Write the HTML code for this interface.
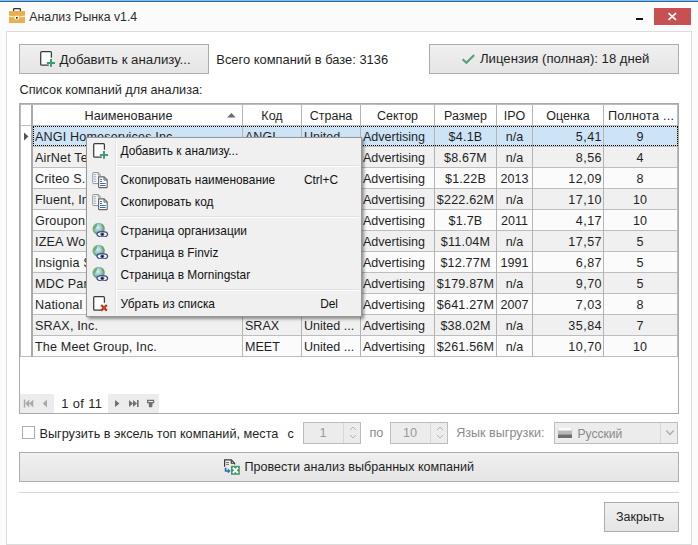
<!DOCTYPE html>
<html><head><meta charset="utf-8"><style>
html,body{margin:0;padding:0}
body{width:698px;height:545px;position:relative;overflow:hidden;background:#fbfbfb;font-family:"Liberation Sans",sans-serif}
.t{position:absolute;white-space:nowrap;line-height:20px;height:20px}
.btn{position:absolute;box-sizing:border-box;border:1px solid #acacac;background:linear-gradient(#f0f0f0,#e5e5e5)}
svg{display:block}
</style></head><body>
<div style="position:absolute;left:0;top:0;width:698px;height:1px;background:#7fbff5"></div>
<div style="position:absolute;left:0;top:1px;width:698px;height:1px;background:#2d6496"></div>
<div style="position:absolute;left:0;top:2px;width:698px;height:1px;background:#ffffff"></div>
<svg style="position:absolute;left:9px;top:7px" width="16" height="16" viewBox="0 0 16 16">
<path d="M4.6 4 V2.4 Q4.6 1.6 5.4 1.6 H10.6 Q11.4 1.6 11.4 2.4 V4" fill="none" stroke="#333" stroke-width="1.25"/>
<rect x="0" y="4" width="16" height="12" fill="#e8b04f"/>
<path d="M0 9.2 L5.5 10 M10.5 10 L16 9.2" stroke="#fbeccb" stroke-width="1.2"/>
<rect x="5.6" y="8.8" width="4.4" height="3.6" rx="0.7" fill="#fffaf0"/>
<rect x="7" y="10.1" width="1.7" height="1.5" fill="#1a1a1a"/>
</svg>
<div class="t" style="left:29.3px;top:6.54px;font-size:12.3px;color:#2b2b2b;">Анализ Рынка v1.4</div>
<div style="position:absolute;left:636px;top:18px;width:7px;height:2px;background:#111"></div>
<div style="position:absolute;left:654px;top:8px;width:37px;height:17px;background:#c75050"></div>
<svg style="position:absolute;left:654px;top:8px" width="37" height="17" viewBox="0 0 37 17">
<path d="M14.5 5.2 L22 11.8 M22 5.2 L14.5 11.8" stroke="#fff" stroke-width="1.7"/></svg>
<div style="position:absolute;left:6px;top:31px;width:686px;height:514px;box-sizing:border-box;background:#fff;border:1px solid #dcdcdc"></div>
<div class="btn" style="left:19px;top:44px;width:190px;height:30px"></div>
<svg style="position:absolute;left:39px;top:50px" width="18" height="18" viewBox="0 0 18 18">
<path d="M12.4 7.8 V2.7 Q12.4 1.7 11.4 1.7 H2.7 Q1.7 1.7 1.7 2.7 V14.2 Q1.7 15.2 2.7 15.2 H9.8" fill="#fff" stroke="#3a3a3a" stroke-width="1.25"/>
<path d="M7.9 13 H16 M12 9 V16.8" stroke="#3a9f70" stroke-width="2"/></svg>
<div class="t" style="left:59.4px;top:49.71px;font-size:13.25px;color:#1f1f1f;">Добавить к анализу...</div>
<div class="t" style="left:216.3px;top:49.53px;font-size:12.9px;color:#1f1f1f;">Всего компаний в базе: 3136</div>
<div class="btn" style="left:429px;top:44px;width:250px;height:30px"></div>
<svg style="position:absolute;left:461px;top:52px" width="14" height="12" viewBox="0 0 14 12">
<path d="M1.6 7.2 L5.4 10.8 L13.2 3" fill="none" stroke="#5a9e80" stroke-width="2.1"/></svg>
<div class="t" style="left:480px;top:49.44px;font-size:13.15px;color:#1f1f1f;">Лицензия (полная): 18 дней</div>
<div class="t" style="left:19.5px;top:79.60px;font-size:12.7px;color:#1f1f1f;">Список компаний для анализа:</div>
<div style="position:absolute;left:19px;top:103px;width:660px;height:311px;background:#fff;box-sizing:border-box;border-top:1px solid #a9a9a9;border-right:1px solid #a9a9a9;border-left:1px solid #a9a9a9;border-bottom:1px solid #a9a9a9"></div>
<div style="position:absolute;left:33px;top:126px;width:644px;height:20px;background:#cde4f7"></div>
<div style="position:absolute;left:33px;top:146px;width:644px;height:1px;background:#bdbdbd"></div>
<div style="position:absolute;left:33px;top:147px;width:644px;height:20px;background:#f0f0f0"></div>
<div style="position:absolute;left:33px;top:167px;width:644px;height:1px;background:#bdbdbd"></div>
<div style="position:absolute;left:33px;top:168px;width:644px;height:20px;background:#fbfbfb"></div>
<div style="position:absolute;left:33px;top:188px;width:644px;height:1px;background:#bdbdbd"></div>
<div style="position:absolute;left:33px;top:189px;width:644px;height:20px;background:#f0f0f0"></div>
<div style="position:absolute;left:33px;top:209px;width:644px;height:1px;background:#bdbdbd"></div>
<div style="position:absolute;left:33px;top:210px;width:644px;height:20px;background:#fbfbfb"></div>
<div style="position:absolute;left:33px;top:230px;width:644px;height:1px;background:#bdbdbd"></div>
<div style="position:absolute;left:33px;top:231px;width:644px;height:20px;background:#f0f0f0"></div>
<div style="position:absolute;left:33px;top:251px;width:644px;height:1px;background:#bdbdbd"></div>
<div style="position:absolute;left:33px;top:252px;width:644px;height:20px;background:#fbfbfb"></div>
<div style="position:absolute;left:33px;top:272px;width:644px;height:1px;background:#bdbdbd"></div>
<div style="position:absolute;left:33px;top:273px;width:644px;height:20px;background:#f0f0f0"></div>
<div style="position:absolute;left:33px;top:293px;width:644px;height:1px;background:#bdbdbd"></div>
<div style="position:absolute;left:33px;top:294px;width:644px;height:20px;background:#fbfbfb"></div>
<div style="position:absolute;left:33px;top:314px;width:644px;height:1px;background:#bdbdbd"></div>
<div style="position:absolute;left:33px;top:315px;width:644px;height:20px;background:#f0f0f0"></div>
<div style="position:absolute;left:33px;top:335px;width:644px;height:1px;background:#bdbdbd"></div>
<div style="position:absolute;left:33px;top:336px;width:644px;height:20px;background:#fbfbfb"></div>
<div style="position:absolute;left:33px;top:356px;width:644px;height:1px;background:#bdbdbd"></div>
<div style="position:absolute;left:20px;top:104px;width:1px;height:253px;background:#bcbcbc"></div>
<div style="position:absolute;left:677px;top:104px;width:1px;height:253px;background:#bcbcbc"></div>
<div style="position:absolute;left:20px;top:104px;width:658px;height:1px;background:#bcbcbc"></div>
<div style="position:absolute;left:20px;top:356px;width:657px;height:1px;background:#bdbdbd"></div>
<div style="position:absolute;left:20px;top:125px;width:657px;height:1px;background:#bdbdbd"></div>
<div style="position:absolute;left:31px;top:105px;width:2px;height:252px;background:#a9a9a9"></div>
<div style="position:absolute;left:242px;top:105px;width:1px;height:252px;background:#b4b4b4"></div>
<div style="position:absolute;left:301px;top:105px;width:1px;height:252px;background:#b4b4b4"></div>
<div style="position:absolute;left:360px;top:105px;width:1px;height:252px;background:#b4b4b4"></div>
<div style="position:absolute;left:434px;top:105px;width:1px;height:252px;background:#b4b4b4"></div>
<div style="position:absolute;left:496px;top:105px;width:1px;height:252px;background:#b4b4b4"></div>
<div style="position:absolute;left:532px;top:105px;width:1px;height:252px;background:#b4b4b4"></div>
<div style="position:absolute;left:603px;top:105px;width:1px;height:252px;background:#b4b4b4"></div>
<div class="t" style="left:84.5px;top:106.20px;font-size:12.7px;color:#1f1f1f;">Наименование</div>
<div class="t" style="left:243px;width:58px;top:106.27px;font-size:12.5px;color:#1f1f1f;text-align:center;">Код</div>
<div class="t" style="left:302px;width:58px;top:106.27px;font-size:12.5px;color:#1f1f1f;text-align:center;">Страна</div>
<div class="t" style="left:361px;width:73px;top:106.27px;font-size:12.5px;color:#1f1f1f;text-align:center;">Сектор</div>
<div class="t" style="left:435px;width:61px;top:106.27px;font-size:12.5px;color:#1f1f1f;text-align:center;">Размер</div>
<div class="t" style="left:497px;width:35px;top:106.27px;font-size:12.5px;color:#1f1f1f;text-align:center;">IPO</div>
<div class="t" style="left:533px;width:70px;top:106.27px;font-size:12.5px;color:#1f1f1f;text-align:center;">Оценка</div>
<div class="t" style="left:608px;top:106.20px;font-size:12.7px;color:#1f1f1f;letter-spacing:0.2px;">Полнота ...</div>
<svg style="position:absolute;left:227px;top:112px" width="10" height="6" viewBox="0 0 10 6"><path d="M0.1 5.6 L4.4 1 L8.7 5.6Z" fill="#6a6a6a"/></svg>
<svg style="position:absolute;left:24px;top:132px" width="5" height="9" viewBox="0 0 5 9"><path d="M0 0.5 L4.5 4.5 L0 8.5Z" fill="#555"/></svg>
<div class="t" style="left:35px;width:206px;top:126.93px;font-size:12.6px;color:#1f1f1f;text-align:left;overflow:hidden;letter-spacing:0.15px;">ANGI Homeservices Inc.</div>
<div class="t" style="left:245px;width:55px;top:126.95px;font-size:12.55px;color:#1f1f1f;text-align:left;overflow:hidden;">ANGI</div>
<div class="t" style="left:304px;width:55px;top:126.95px;font-size:12.55px;color:#1f1f1f;text-align:left;overflow:hidden;">United ...</div>
<div class="t" style="left:363px;width:70px;top:126.95px;font-size:12.55px;color:#1f1f1f;text-align:left;overflow:hidden;">Advertising</div>
<div class="t" style="left:435px;width:61px;top:126.95px;font-size:12.55px;color:#1f1f1f;text-align:center;letter-spacing:0.2px;">$4.1B</div>
<div class="t" style="left:497px;width:35px;top:126.95px;font-size:12.55px;color:#1f1f1f;text-align:center;">n/a</div>
<div class="t" style="left:533px;width:69px;top:126.95px;font-size:12.55px;color:#1f1f1f;text-align:right;letter-spacing:0.45px;">5,41</div>
<div class="t" style="left:604px;width:72px;top:126.95px;font-size:12.55px;color:#1f1f1f;text-align:center;">9</div>
<div class="t" style="left:35px;width:206px;top:147.93px;font-size:12.6px;color:#1f1f1f;text-align:left;overflow:hidden;letter-spacing:0.15px;">AirNet Technology Inc.</div>
<div class="t" style="left:245px;width:55px;top:147.95px;font-size:12.55px;color:#1f1f1f;text-align:left;overflow:hidden;">ANTE</div>
<div class="t" style="left:304px;width:55px;top:147.95px;font-size:12.55px;color:#1f1f1f;text-align:left;overflow:hidden;">China</div>
<div class="t" style="left:363px;width:70px;top:147.95px;font-size:12.55px;color:#1f1f1f;text-align:left;overflow:hidden;">Advertising</div>
<div class="t" style="left:435px;width:61px;top:147.95px;font-size:12.55px;color:#1f1f1f;text-align:center;letter-spacing:0.2px;">$8.67M</div>
<div class="t" style="left:497px;width:35px;top:147.95px;font-size:12.55px;color:#1f1f1f;text-align:center;">n/a</div>
<div class="t" style="left:533px;width:69px;top:147.95px;font-size:12.55px;color:#1f1f1f;text-align:right;letter-spacing:0.45px;">8,56</div>
<div class="t" style="left:604px;width:72px;top:147.95px;font-size:12.55px;color:#1f1f1f;text-align:center;">4</div>
<div class="t" style="left:35px;width:206px;top:168.93px;font-size:12.6px;color:#1f1f1f;text-align:left;overflow:hidden;letter-spacing:0.15px;">Criteo S...</div>
<div class="t" style="left:245px;width:55px;top:168.95px;font-size:12.55px;color:#1f1f1f;text-align:left;overflow:hidden;">CRTO</div>
<div class="t" style="left:304px;width:55px;top:168.95px;font-size:12.55px;color:#1f1f1f;text-align:left;overflow:hidden;">France</div>
<div class="t" style="left:363px;width:70px;top:168.95px;font-size:12.55px;color:#1f1f1f;text-align:left;overflow:hidden;">Advertising</div>
<div class="t" style="left:435px;width:61px;top:168.95px;font-size:12.55px;color:#1f1f1f;text-align:center;letter-spacing:0.2px;">$1.22B</div>
<div class="t" style="left:497px;width:35px;top:168.95px;font-size:12.55px;color:#1f1f1f;text-align:center;">2013</div>
<div class="t" style="left:533px;width:69px;top:168.95px;font-size:12.55px;color:#1f1f1f;text-align:right;letter-spacing:0.45px;">12,09</div>
<div class="t" style="left:604px;width:72px;top:168.95px;font-size:12.55px;color:#1f1f1f;text-align:center;">8</div>
<div class="t" style="left:35px;width:206px;top:189.93px;font-size:12.6px;color:#1f1f1f;text-align:left;overflow:hidden;letter-spacing:0.15px;">Fluent, Inc.</div>
<div class="t" style="left:245px;width:55px;top:189.95px;font-size:12.55px;color:#1f1f1f;text-align:left;overflow:hidden;">FLNT</div>
<div class="t" style="left:304px;width:55px;top:189.95px;font-size:12.55px;color:#1f1f1f;text-align:left;overflow:hidden;">United ...</div>
<div class="t" style="left:363px;width:70px;top:189.95px;font-size:12.55px;color:#1f1f1f;text-align:left;overflow:hidden;">Advertising</div>
<div class="t" style="left:435px;width:61px;top:189.95px;font-size:12.55px;color:#1f1f1f;text-align:center;letter-spacing:0.2px;">$222.62M</div>
<div class="t" style="left:497px;width:35px;top:189.95px;font-size:12.55px;color:#1f1f1f;text-align:center;">n/a</div>
<div class="t" style="left:533px;width:69px;top:189.95px;font-size:12.55px;color:#1f1f1f;text-align:right;letter-spacing:0.45px;">17,10</div>
<div class="t" style="left:604px;width:72px;top:189.95px;font-size:12.55px;color:#1f1f1f;text-align:center;">10</div>
<div class="t" style="left:35px;width:206px;top:210.93px;font-size:12.6px;color:#1f1f1f;text-align:left;overflow:hidden;letter-spacing:0.15px;">Groupon, Inc.</div>
<div class="t" style="left:245px;width:55px;top:210.95px;font-size:12.55px;color:#1f1f1f;text-align:left;overflow:hidden;">GRPN</div>
<div class="t" style="left:304px;width:55px;top:210.95px;font-size:12.55px;color:#1f1f1f;text-align:left;overflow:hidden;">United ...</div>
<div class="t" style="left:363px;width:70px;top:210.95px;font-size:12.55px;color:#1f1f1f;text-align:left;overflow:hidden;">Advertising</div>
<div class="t" style="left:435px;width:61px;top:210.95px;font-size:12.55px;color:#1f1f1f;text-align:center;letter-spacing:0.2px;">$1.7B</div>
<div class="t" style="left:497px;width:35px;top:210.95px;font-size:12.55px;color:#1f1f1f;text-align:center;">2011</div>
<div class="t" style="left:533px;width:69px;top:210.95px;font-size:12.55px;color:#1f1f1f;text-align:right;letter-spacing:0.45px;">4,17</div>
<div class="t" style="left:604px;width:72px;top:210.95px;font-size:12.55px;color:#1f1f1f;text-align:center;">10</div>
<div class="t" style="left:35px;width:206px;top:231.93px;font-size:12.6px;color:#1f1f1f;text-align:left;overflow:hidden;letter-spacing:0.15px;">IZEA Worldwide, Inc.</div>
<div class="t" style="left:245px;width:55px;top:231.95px;font-size:12.55px;color:#1f1f1f;text-align:left;overflow:hidden;">IZEA</div>
<div class="t" style="left:304px;width:55px;top:231.95px;font-size:12.55px;color:#1f1f1f;text-align:left;overflow:hidden;">United ...</div>
<div class="t" style="left:363px;width:70px;top:231.95px;font-size:12.55px;color:#1f1f1f;text-align:left;overflow:hidden;">Advertising</div>
<div class="t" style="left:435px;width:61px;top:231.95px;font-size:12.55px;color:#1f1f1f;text-align:center;letter-spacing:0.2px;">$11.04M</div>
<div class="t" style="left:497px;width:35px;top:231.95px;font-size:12.55px;color:#1f1f1f;text-align:center;">n/a</div>
<div class="t" style="left:533px;width:69px;top:231.95px;font-size:12.55px;color:#1f1f1f;text-align:right;letter-spacing:0.45px;">17,57</div>
<div class="t" style="left:604px;width:72px;top:231.95px;font-size:12.55px;color:#1f1f1f;text-align:center;">5</div>
<div class="t" style="left:35px;width:206px;top:252.93px;font-size:12.6px;color:#1f1f1f;text-align:left;overflow:hidden;letter-spacing:0.15px;">Insignia Systems, Inc.</div>
<div class="t" style="left:245px;width:55px;top:252.95px;font-size:12.55px;color:#1f1f1f;text-align:left;overflow:hidden;">ISIG</div>
<div class="t" style="left:304px;width:55px;top:252.95px;font-size:12.55px;color:#1f1f1f;text-align:left;overflow:hidden;">United ...</div>
<div class="t" style="left:363px;width:70px;top:252.95px;font-size:12.55px;color:#1f1f1f;text-align:left;overflow:hidden;">Advertising</div>
<div class="t" style="left:435px;width:61px;top:252.95px;font-size:12.55px;color:#1f1f1f;text-align:center;letter-spacing:0.2px;">$12.77M</div>
<div class="t" style="left:497px;width:35px;top:252.95px;font-size:12.55px;color:#1f1f1f;text-align:center;">1991</div>
<div class="t" style="left:533px;width:69px;top:252.95px;font-size:12.55px;color:#1f1f1f;text-align:right;letter-spacing:0.45px;">6,87</div>
<div class="t" style="left:604px;width:72px;top:252.95px;font-size:12.55px;color:#1f1f1f;text-align:center;">5</div>
<div class="t" style="left:35px;width:206px;top:273.93px;font-size:12.6px;color:#1f1f1f;text-align:left;overflow:hidden;letter-spacing:0.15px;">MDC Partners Inc.</div>
<div class="t" style="left:245px;width:55px;top:273.95px;font-size:12.55px;color:#1f1f1f;text-align:left;overflow:hidden;">MDCA</div>
<div class="t" style="left:304px;width:55px;top:273.95px;font-size:12.55px;color:#1f1f1f;text-align:left;overflow:hidden;">United ...</div>
<div class="t" style="left:363px;width:70px;top:273.95px;font-size:12.55px;color:#1f1f1f;text-align:left;overflow:hidden;">Advertising</div>
<div class="t" style="left:435px;width:61px;top:273.95px;font-size:12.55px;color:#1f1f1f;text-align:center;letter-spacing:0.2px;">$179.87M</div>
<div class="t" style="left:497px;width:35px;top:273.95px;font-size:12.55px;color:#1f1f1f;text-align:center;">n/a</div>
<div class="t" style="left:533px;width:69px;top:273.95px;font-size:12.55px;color:#1f1f1f;text-align:right;letter-spacing:0.45px;">9,70</div>
<div class="t" style="left:604px;width:72px;top:273.95px;font-size:12.55px;color:#1f1f1f;text-align:center;">5</div>
<div class="t" style="left:35px;width:206px;top:294.93px;font-size:12.6px;color:#1f1f1f;text-align:left;overflow:hidden;letter-spacing:0.15px;">National CineMedia, Inc.</div>
<div class="t" style="left:245px;width:55px;top:294.95px;font-size:12.55px;color:#1f1f1f;text-align:left;overflow:hidden;">NCMI</div>
<div class="t" style="left:304px;width:55px;top:294.95px;font-size:12.55px;color:#1f1f1f;text-align:left;overflow:hidden;">United ...</div>
<div class="t" style="left:363px;width:70px;top:294.95px;font-size:12.55px;color:#1f1f1f;text-align:left;overflow:hidden;">Advertising</div>
<div class="t" style="left:435px;width:61px;top:294.95px;font-size:12.55px;color:#1f1f1f;text-align:center;letter-spacing:0.2px;">$641.27M</div>
<div class="t" style="left:497px;width:35px;top:294.95px;font-size:12.55px;color:#1f1f1f;text-align:center;">2007</div>
<div class="t" style="left:533px;width:69px;top:294.95px;font-size:12.55px;color:#1f1f1f;text-align:right;letter-spacing:0.45px;">7,03</div>
<div class="t" style="left:604px;width:72px;top:294.95px;font-size:12.55px;color:#1f1f1f;text-align:center;">8</div>
<div class="t" style="left:35px;width:206px;top:315.93px;font-size:12.6px;color:#1f1f1f;text-align:left;overflow:hidden;letter-spacing:0.15px;">SRAX, Inc.</div>
<div class="t" style="left:245px;width:55px;top:315.95px;font-size:12.55px;color:#1f1f1f;text-align:left;overflow:hidden;">SRAX</div>
<div class="t" style="left:304px;width:55px;top:315.95px;font-size:12.55px;color:#1f1f1f;text-align:left;overflow:hidden;">United ...</div>
<div class="t" style="left:363px;width:70px;top:315.95px;font-size:12.55px;color:#1f1f1f;text-align:left;overflow:hidden;">Advertising</div>
<div class="t" style="left:435px;width:61px;top:315.95px;font-size:12.55px;color:#1f1f1f;text-align:center;letter-spacing:0.2px;">$38.02M</div>
<div class="t" style="left:497px;width:35px;top:315.95px;font-size:12.55px;color:#1f1f1f;text-align:center;">n/a</div>
<div class="t" style="left:533px;width:69px;top:315.95px;font-size:12.55px;color:#1f1f1f;text-align:right;letter-spacing:0.45px;">35,84</div>
<div class="t" style="left:604px;width:72px;top:315.95px;font-size:12.55px;color:#1f1f1f;text-align:center;">7</div>
<div class="t" style="left:35px;width:206px;top:336.93px;font-size:12.6px;color:#1f1f1f;text-align:left;overflow:hidden;letter-spacing:0.15px;">The Meet Group, Inc.</div>
<div class="t" style="left:245px;width:55px;top:336.95px;font-size:12.55px;color:#1f1f1f;text-align:left;overflow:hidden;">MEET</div>
<div class="t" style="left:304px;width:55px;top:336.95px;font-size:12.55px;color:#1f1f1f;text-align:left;overflow:hidden;">United ...</div>
<div class="t" style="left:363px;width:70px;top:336.95px;font-size:12.55px;color:#1f1f1f;text-align:left;overflow:hidden;">Advertising</div>
<div class="t" style="left:435px;width:61px;top:336.95px;font-size:12.55px;color:#1f1f1f;text-align:center;letter-spacing:0.2px;">$261.56M</div>
<div class="t" style="left:497px;width:35px;top:336.95px;font-size:12.55px;color:#1f1f1f;text-align:center;">n/a</div>
<div class="t" style="left:533px;width:69px;top:336.95px;font-size:12.55px;color:#1f1f1f;text-align:right;letter-spacing:0.45px;">10,70</div>
<div class="t" style="left:604px;width:72px;top:336.95px;font-size:12.55px;color:#1f1f1f;text-align:center;">10</div>
<div style="position:absolute;left:33px;top:126px;width:645px;height:20px;box-sizing:border-box;border:1px dotted #000"></div>
<div style="position:absolute;left:20px;top:394px;width:34px;height:19px;background:#ececec"></div>
<div style="position:absolute;left:108px;top:394px;width:51px;height:19px;background:#ececec"></div>
<svg style="position:absolute;left:20px;top:394px" width="140" height="19" viewBox="0 0 140 19">
<g fill="#a9a9a9"><rect x="3.8" y="5.6" width="1.5" height="8"/><path d="M5.3 9.6 L9.3 5.6 V13.6Z M9.3 9.6 L13.3 5.6 V13.6Z"/>
<path d="M22.8 9.6 L27 5.6 V13.6Z"/></g>
<g fill="#707070"><path d="M95 6 L99.5 9.5 L95 13Z"/>
<path d="M109 6 L113 9.5 L109 13Z M113 6 L117 9.5 L113 13Z"/><rect x="117" y="6" width="1.6" height="7"/>
<path d="M127.6 6.4 H133.6 V8.6 H127.6Z" fill="none" stroke="#707070" stroke-width="1.2"/><path d="M128.6 8.6 H132.6 L132.2 13.2 H129Z"/></g></svg>
<div class="t" style="left:61.3px;top:393.73px;font-size:12.9px;color:#262626;letter-spacing:0.35px;">1 of 11</div>
<div style="position:absolute;left:22px;top:426px;width:11px;height:11px;border:1px solid #adadad;background:#fff"></div>
<div class="t" style="left:39.5px;top:424.00px;font-size:12.7px;color:#1f1f1f;">Выгрузить в эксель топ компаний, места</div>
<div class="t" style="left:287.5px;top:424.00px;font-size:12.7px;color:#1f1f1f;">с</div>
<div style="position:absolute;left:303px;top:422px;width:56px;height:20px;border:1px solid #bcbcbc;background:#ececec"></div><div style="position:absolute;left:343px;top:423px;width:1px;height:20px;background:#d7d7d7"></div><div class="t" style="left:303px;width:40px;top:423.10px;font-size:12.7px;color:#9a9a9a;text-align:center;">1</div><svg style="position:absolute;left:349px;top:425px" width="8" height="16" viewBox="0 0 8 16">
<path d="M1 5 L4 2 L7 5 M1 10 L4 13 L7 10" fill="none" stroke="#b5b5b5" stroke-width="1"/></svg>
<div class="t" style="left:369.5px;top:423.10px;font-size:12.7px;color:#8a8a8a;">по</div>
<div style="position:absolute;left:390px;top:422px;width:56px;height:20px;border:1px solid #bcbcbc;background:#ececec"></div><div style="position:absolute;left:430px;top:423px;width:1px;height:20px;background:#d7d7d7"></div><div class="t" style="left:390px;width:40px;top:423.10px;font-size:12.7px;color:#9a9a9a;text-align:center;">10</div><svg style="position:absolute;left:436px;top:425px" width="8" height="16" viewBox="0 0 8 16">
<path d="M1 5 L4 2 L7 5 M1 10 L4 13 L7 10" fill="none" stroke="#b5b5b5" stroke-width="1"/></svg>
<div class="t" style="left:456.2px;top:423.13px;font-size:12.6px;color:#8a8a8a;">Язык выгрузки:</div>
<div style="position:absolute;left:554px;top:422px;width:122px;height:20px;border:1px solid #bcbcbc;background:#ececec"></div>
<div style="position:absolute;left:660px;top:423px;width:1px;height:20px;background:#d7d7d7"></div>
<svg style="position:absolute;left:663px;top:425px" width="14" height="16" viewBox="0 0 14 16"><path d="M3.3 5.5 L7 9.5 L10.7 5.5" fill="none" stroke="#ababab" stroke-width="1.3"/></svg>
<svg style="position:absolute;left:557px;top:427px" width="17" height="11" viewBox="0 0 17 11">
<rect x="1" y="0" width="14" height="3.8" fill="#fafafa" stroke="#d4d4d4" stroke-width="0.6"/>
<rect x="1" y="3.8" width="14" height="3.6" fill="#b9b9b9"/><rect x="1" y="7.4" width="14" height="3.6" fill="#6e6e6e"/></svg>
<div class="t" style="left:577.5px;top:424.01px;font-size:12.1px;color:#8a8a8a;">Русский</div>
<div class="btn" style="left:19px;top:452px;width:660px;height:30px"></div>
<svg style="position:absolute;left:220px;top:455px" width="24" height="24" viewBox="0 0 24 24">
<path d="M4.6 11.8 V4.9 H11.3 L14.6 8.2 V9.6" fill="none" stroke="#3a3a3a" stroke-width="1.2"/>
<path d="M11.3 4.9 V8.2 H14.6" fill="none" stroke="#3a3a3a" stroke-width="1.1"/>
<path d="M6 7.5 H9 M6 9.4 H9" stroke="#777" stroke-width="1"/>
<path d="M5.6 12.8 V16 H8.4" fill="none" stroke="#2e6db4" stroke-width="1.7"/>
<path d="M7.8 13.6 L10.6 16 L7.8 18.4Z" fill="#2e6db4"/>
<rect x="11" y="10.8" width="8.8" height="9" fill="#3d9a6a"/>
<path d="M12.9 12.6 L17.9 18 M17.9 12.6 L12.9 18" stroke="#fff" stroke-width="2"/></svg>
<div class="t" style="left:244.4px;top:457.43px;font-size:12.6px;color:#1f1f1f;">Провести анализ выбранных компаний</div>
<div style="position:absolute;left:19px;top:492px;width:660px;height:1px;background:#d9d9d9"></div>
<div class="btn" style="left:604px;top:502px;width:75px;height:30px"></div>
<div class="t" style="left:616px;top:506.67px;font-size:12.5px;color:#1f1f1f;">Закрыть</div>
<div style="position:absolute;left:86px;top:137px;width:274px;height:178px;background:#f0f0f0;border:1px solid #979797;box-shadow:2px 2px 3px rgba(0,0,0,0.42)"></div>
<div style="position:absolute;left:115px;top:140px;width:1px;height:174px;background:#e2e2e2"></div>
<div style="position:absolute;left:116px;top:140px;width:1px;height:174px;background:#ffffff"></div>
<div style="position:absolute;left:117px;top:165px;width:242px;height:1px;background:#e0e0e0"></div>
<div style="position:absolute;left:117px;top:166px;width:242px;height:1px;background:#ffffff"></div>
<div style="position:absolute;left:117px;top:216px;width:242px;height:1px;background:#e0e0e0"></div>
<div style="position:absolute;left:117px;top:217px;width:242px;height:1px;background:#ffffff"></div>
<div style="position:absolute;left:117px;top:289px;width:242px;height:1px;background:#e0e0e0"></div>
<div style="position:absolute;left:117px;top:290px;width:242px;height:1px;background:#ffffff"></div>
<div class="t" style="left:120.5px;top:140.88px;font-size:11.9px;color:#111;">Добавить к анализу...</div>
<div class="t" style="left:120.5px;top:169.58px;font-size:11.9px;color:#111;">Скопировать наименование</div>
<div class="t" style="left:250px;width:88px;top:169.58px;font-size:11.9px;color:#111;text-align:right;">Ctrl+C</div>
<div class="t" style="left:120.5px;top:191.88px;font-size:11.9px;color:#111;">Скопировать код</div>
<div class="t" style="left:120.5px;top:220.88px;font-size:11.9px;color:#111;">Страница организации</div>
<div class="t" style="left:120.5px;top:242.88px;font-size:11.9px;color:#111;">Страница в Finviz</div>
<div class="t" style="left:120.5px;top:264.88px;font-size:11.9px;color:#111;">Страница в Morningstar</div>
<div class="t" style="left:120.5px;top:293.88px;font-size:11.9px;color:#111;">Убрать из списка</div>
<div class="t" style="left:250px;width:88px;top:293.88px;font-size:11.9px;color:#111;text-align:right;">Del</div>
<svg style="position:absolute;left:92px;top:142px" width="18" height="18" viewBox="0 0 18 18">
<path d="M12.4 7.8 V2.7 Q12.4 1.7 11.4 1.7 H2.7 Q1.7 1.7 1.7 2.7 V14.2 Q1.7 15.2 2.7 15.2 H9.8" fill="#fff" stroke="#3a3a3a" stroke-width="1.25"/>
<path d="M7.9 13 H16 M12 9 V16.8" stroke="#3a9f70" stroke-width="2"/></svg>
<svg style="position:absolute;left:92px;top:172px" width="17" height="17" viewBox="0 0 17 17">
<path d="M6 11.6 H1.6 Q0.8 11.6 0.8 10.8 V1.2 Q0.8 0.6 1.4 0.6 H6.2 L8.8 3.2" fill="#fff" stroke="#8c8c8c" stroke-width="1"/>
<path d="M6.2 0.6 V3.2 H8.8" fill="none" stroke="#8c8c8c" stroke-width="0.9"/>
<path d="M1.9 2.7 H4.4 M1.9 4.8 H4.4 M1.9 7.1 H4.4 M1.9 9.3 H4.4" stroke="#8597ad" stroke-width="0.9"/>
<path d="M6.6 4.9 H12 L15.2 8.1 V15.1 Q15.2 15.6 14.7 15.6 H7.1 Q6.6 15.6 6.6 15.1Z" fill="#fff" stroke="#666" stroke-width="1.15"/>
<path d="M12 4.9 V8.1 H15.2" fill="none" stroke="#666" stroke-width="1"/>
<path d="M8 7.5 H10.1 M8 9.5 H10.1" stroke="#4a6f9e" stroke-width="1.05"/>
<path d="M8 11.5 H13.7 M8 13.4 H13.7" stroke="#3f6fa8" stroke-width="1.05"/></svg>
<svg style="position:absolute;left:92px;top:194px" width="17" height="17" viewBox="0 0 17 17">
<path d="M6 11.6 H1.6 Q0.8 11.6 0.8 10.8 V1.2 Q0.8 0.6 1.4 0.6 H6.2 L8.8 3.2" fill="#fff" stroke="#8c8c8c" stroke-width="1"/>
<path d="M6.2 0.6 V3.2 H8.8" fill="none" stroke="#8c8c8c" stroke-width="0.9"/>
<path d="M1.9 2.7 H4.4 M1.9 4.8 H4.4 M1.9 7.1 H4.4 M1.9 9.3 H4.4" stroke="#8597ad" stroke-width="0.9"/>
<path d="M6.6 4.9 H12 L15.2 8.1 V15.1 Q15.2 15.6 14.7 15.6 H7.1 Q6.6 15.6 6.6 15.1Z" fill="#fff" stroke="#666" stroke-width="1.15"/>
<path d="M12 4.9 V8.1 H15.2" fill="none" stroke="#666" stroke-width="1"/>
<path d="M8 7.5 H10.1 M8 9.5 H10.1" stroke="#4a6f9e" stroke-width="1.05"/>
<path d="M8 11.5 H13.7 M8 13.4 H13.7" stroke="#3f6fa8" stroke-width="1.05"/></svg>
<svg style="position:absolute;left:92px;top:220px" width="18" height="17" viewBox="0 0 18 17">
<defs><radialGradient id="gg220" cx="0.45" cy="0.4" r="0.6"><stop offset="0" stop-color="#d8f0f4"/><stop offset="0.55" stop-color="#8cc0c8"/><stop offset="1" stop-color="#4f8a3a"/></radialGradient></defs>
<circle cx="6.6" cy="8.8" r="6.1" fill="url(#gg220)"/>
<path d="M1.5 7 Q3 4 5 3.6 Q5.5 6 3.5 8.5 Q2.5 9.5 1.2 9Z M9.5 3.5 Q12 5 12.6 8 Q10.5 8 9.8 6.2Z" fill="#6fa342" opacity="0.8"/>
<ellipse cx="10.3" cy="14.3" rx="5.3" ry="2.7" fill="#f4f6fb" stroke="#3d4d7c" stroke-width="1.3"/>
<circle cx="10.3" cy="14.3" r="1.9" fill="#46548a"/><circle cx="10.3" cy="14.3" r="0.8" fill="#000"/></svg>
<svg style="position:absolute;left:92px;top:242px" width="18" height="17" viewBox="0 0 18 17">
<defs><radialGradient id="gg242" cx="0.45" cy="0.4" r="0.6"><stop offset="0" stop-color="#d8f0f4"/><stop offset="0.55" stop-color="#8cc0c8"/><stop offset="1" stop-color="#4f8a3a"/></radialGradient></defs>
<circle cx="6.6" cy="8.8" r="6.1" fill="url(#gg242)"/>
<path d="M1.5 7 Q3 4 5 3.6 Q5.5 6 3.5 8.5 Q2.5 9.5 1.2 9Z M9.5 3.5 Q12 5 12.6 8 Q10.5 8 9.8 6.2Z" fill="#6fa342" opacity="0.8"/>
<ellipse cx="10.3" cy="14.3" rx="5.3" ry="2.7" fill="#f4f6fb" stroke="#3d4d7c" stroke-width="1.3"/>
<circle cx="10.3" cy="14.3" r="1.9" fill="#46548a"/><circle cx="10.3" cy="14.3" r="0.8" fill="#000"/></svg>
<svg style="position:absolute;left:92px;top:264px" width="18" height="17" viewBox="0 0 18 17">
<defs><radialGradient id="gg264" cx="0.45" cy="0.4" r="0.6"><stop offset="0" stop-color="#d8f0f4"/><stop offset="0.55" stop-color="#8cc0c8"/><stop offset="1" stop-color="#4f8a3a"/></radialGradient></defs>
<circle cx="6.6" cy="8.8" r="6.1" fill="url(#gg264)"/>
<path d="M1.5 7 Q3 4 5 3.6 Q5.5 6 3.5 8.5 Q2.5 9.5 1.2 9Z M9.5 3.5 Q12 5 12.6 8 Q10.5 8 9.8 6.2Z" fill="#6fa342" opacity="0.8"/>
<ellipse cx="10.3" cy="14.3" rx="5.3" ry="2.7" fill="#f4f6fb" stroke="#3d4d7c" stroke-width="1.3"/>
<circle cx="10.3" cy="14.3" r="1.9" fill="#46548a"/><circle cx="10.3" cy="14.3" r="0.8" fill="#000"/></svg>
<svg style="position:absolute;left:92px;top:295px" width="18" height="18" viewBox="0 0 18 18">
<path d="M12.4 7.8 V2.7 Q12.4 1.7 11.4 1.7 H2.7 Q1.7 1.7 1.7 2.7 V14.2 Q1.7 15.2 2.7 15.2 H9" fill="#fff" stroke="#3a3a3a" stroke-width="1.25"/>
<path d="M9.2 10 L14.8 15.6 M14.8 10 L9.2 15.6" stroke="#b8341c" stroke-width="2.2"/>
<circle cx="12" cy="12.8" r="1.8" fill="#d8401f"/></svg>
</body></html>
